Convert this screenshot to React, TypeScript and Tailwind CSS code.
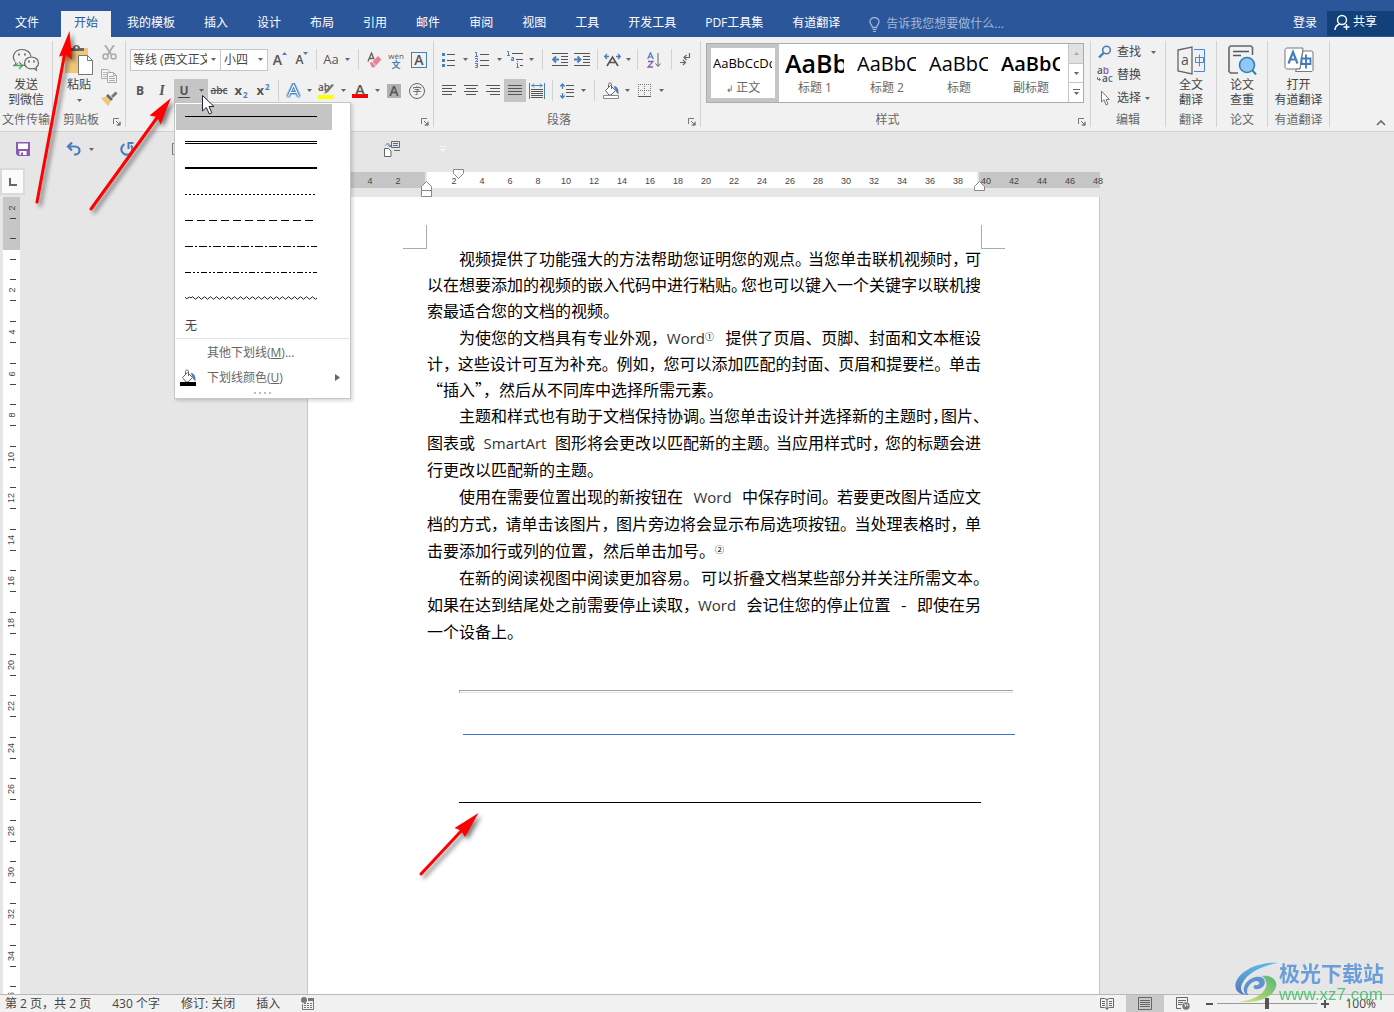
import { Fragment, ReactNode, useState } from "react";
import clsx from "clsx";

const TABS = [
  "文件",
  "开始",
  "我的模板",
  "插入",
  "设计",
  "布局",
  "引用",
  "邮件",
  "审阅",
  "视图",
  "工具",
  "开发工具",
  "PDF工具集",
  "有道翻译",
];

const STYLES = [
  { name: "正文", sample: "AaBbCcDd", font: "text-[13px]" },
  { name: "标题 1", sample: "AaBb", font: "text-[25px] font-semibold" },
  { name: "标题 2", sample: "AaBbC", font: "text-[20px]" },
  { name: "标题", sample: "AaBbC", font: "text-[20px]" },
  { name: "副标题", sample: "AaBbC", font: "text-[20px] font-semibold" },
];

type DocLine = { text: string; indent?: boolean; last?: boolean };

const PARAGRAPHS: { className: string; line: string; lines: DocLine[] }[] = [
  {
    className: "leading-[26px] mb-px",
    line: "h-[26px]",
    lines: [
      { text: "视频提供了功能强大的方法帮助您证明您的观点。当您单击联机视频时，可", indent: true },
      { text: "以在想要添加的视频的嵌入代码中进行粘贴。您也可以键入一个关键字以联机搜" },
      { text: "索最适合您的文档的视频。", last: true },
    ],
  },
  {
    className: "leading-[26px]",
    line: "h-[26px]",
    lines: [
      { text: "为使您的文档具有专业外观，Word① 提供了页眉、页脚、封面和文本框设", indent: true },
      { text: "计，这些设计可互为补充。例如，您可以添加匹配的封面、页眉和提要栏。单击" },
      { text: "“插入”，然后从不同库中选择所需元素。", last: true },
    ],
  },
  {
    className: "leading-[27px]",
    line: "h-[27px]",
    lines: [
      { text: "主题和样式也有助于文档保持协调。当您单击设计并选择新的主题时，图片、", indent: true },
      { text: "图表或 SmartArt 图形将会更改以匹配新的主题。当应用样式时，您的标题会进" },
      { text: "行更改以匹配新的主题。", last: true },
    ],
  },
  {
    className: "leading-[27px]",
    line: "h-[27px]",
    lines: [
      { text: "使用在需要位置出现的新按钮在 Word 中保存时间。若要更改图片适应文", indent: true },
      { text: "档的方式，请单击该图片，图片旁边将会显示布局选项按钮。当处理表格时，单" },
      { text: "击要添加行或列的位置，然后单击加号。②", last: true },
    ],
  },
  {
    className: "leading-[27px]",
    line: "h-[27px]",
    lines: [
      { text: "在新的阅读视图中阅读更加容易。可以折叠文档某些部分并关注所需文本。", indent: true },
      { text: "如果在达到结尾处之前需要停止读取，Word 会记住您的停止位置 - 即使在另" },
      { text: "一个设备上。", last: true },
    ],
  },
];

const H_RULER = [8, 6, 4, 2, 0, ...Array.from({ length: 24 }, (_, i) => (i + 1) * 2)];
const V_RULER = Array.from({ length: 19 }, (_, i) => i * 2);

const UNDERLINES = ["单线", "双线", "粗线", "点线", "虚线", "点划线", "双点划线", "波浪线"];

/* ---------- small pieces ---------- */

function Svg({
  w,
  h,
  children,
  className,
}: {
  w: number;
  h: number;
  children: ReactNode;
  className?: string;
}) {
  return (
    <svg width={w} height={h} viewBox={`0 0 ${w} ${h}`} fill="none" className={clsx("shrink-0", className)} aria-hidden="true">
      {children}
    </svg>
  );
}

function Caret() {
  return (
    <Svg w={5} h={3}>
      <path d="M0 0h5L2.500 3z" fill="#666" />
    </Svg>
  );
}

function Tool({ label, w, active, children }: { label: string; w: string; active?: boolean; children: ReactNode }) {
  return (
    <button
      type="button"
      aria-label={label}
      className={clsx("flex h-[23px] shrink-0 items-center justify-center text-[#555]", w, active && "bg-[#c5c5c5]")}
    >
      {children}
    </button>
  );
}

function Drop({ label, active, w = "w-[10px]" }: { label: string; active?: boolean; w?: string }) {
  return (
    <Tool label={label} w={w} active={active}>
      <Caret />
    </Tool>
  );
}

function Sep({ w = "w-2" }: { w?: string }) {
  return (
    <span className={clsx("flex h-[21px] shrink-0 justify-center", w)}>
      <span className="w-px bg-[#d2d2d2]" />
    </span>
  );
}

function Group({ label, w, launcher, children }: { label: string; w: string; launcher?: boolean; children: ReactNode }) {
  return (
    <section aria-label={label} className={clsx("flex shrink-0 flex-col border-r border-[#d2d2d2]", w)}>
      <div className="flex-1">{children}</div>
      <div className="flex h-[14px] items-center">
        <span className="flex-1 text-center leading-4 whitespace-nowrap text-[#666]">{label}</span>
        {launcher && (
          <button type="button" aria-label={`${label}设置`} className="mt-1 mr-1 ml-1">
            <Svg w={8} h={8}>
              <path d="M.5 6V.5H6M3 3l3 3M7 3.500V7H3.500" stroke="#777" />
              <path d="M7.500 4v3.500H4z" fill="#777" />
            </Svg>
          </button>
        )}
      </div>
    </section>
  );
}

function BigButton({ icon, lines }: { icon: ReactNode; lines: string[] }) {
  return (
    <button type="button" className="flex w-full flex-col items-center pt-1 leading-[15px] text-[#444]">
      <span className="mb-[2px] flex h-[30px] items-center">{icon}</span>
      {lines.map((l) => (
        <span key={l} className="whitespace-nowrap">
          {l}
        </span>
      ))}
    </button>
  );
}

/* horizontal strokes for list and alignment icons: [y, x1, x2] */
function Strokes({ rows, color = "#555" }: { rows: number[][]; color?: string }) {
  return <path d={rows.map(([y, a, b]) => `M${a} ${y + 0.5}H${b}`).join("")} stroke={color} />;
}

function BucketIcon({ bar }: { bar: "outline" | "black" }) {
  return (
    <Svg w={16} h={17}>
      <path d="M2.500 8.500l5-5 5 5-4.500 4.500H6z" fill="#fff" stroke="#666" />
      <path d="M5.500 6V2.500C5.500.5 8.500.5 8.500 2.500V7" stroke="#666" />
      <path d="M10.500 4c3.500 0 5.500 3 5 8-1.500-.5-2.500-2-3-4z" fill="#4a7ebb" />
      {bar === "black" ? <path d="M0 13h16v4H0z" fill="#000" /> : <path d="M.5 13.500h15v3H.5z" fill="#fff" stroke="#888" />}
    </Svg>
  );
}

/* ---------- header ---------- */

function TitleBar() {
  return (
    <header className="flex h-[37px] shrink-0 items-end bg-[#2b579a] text-white">
      <nav className="flex gap-[3px] pl-[2px]">
        {TABS.map((t, i) => (
          <button
            key={t}
            type="button"
            className={clsx(
              "h-[26px] px-[13px] pb-[3px] whitespace-nowrap",
              i === 0 && "mr-[6px]",
              t === "开始" && "bg-[#f1f1f1] text-[#2b579a]"
            )}
          >
            {t}
          </button>
        ))}
      </nav>
      <label className="ml-4 flex h-[26px] items-center">
        <Svg w={11} h={15}>
          <path d="M3.500 10.500C3.500 8.500 1 7.500 1 4.800a4.500 4.300 0 0 1 9 0c0 2.700-2.500 3.700-2.500 5.700z" stroke="#a3b7d8" strokeWidth="1.300" />
          <path d="M3.500 12.500h4M4 14.500h3" stroke="#a3b7d8" />
        </Svg>
        <input
          aria-label="告诉我您想要做什么"
          placeholder="告诉我您想要做什么..."
          className="ml-[6px] w-[140px] bg-transparent outline-none placeholder:text-[#a3b7d8]"
        />
      </label>
      <div className="ml-auto flex">
        <button type="button" className="h-[26px] px-[10px] pb-[3px]">
          登录
        </button>
        <button type="button" className="mb-px flex h-[25px] items-center gap-[3px] bg-[#124078] pr-[17px] pb-[3px] pl-[7px]">
          <Svg w={16} h={17}>
            <circle cx="8" cy="6" r="4.500" stroke="#fff" strokeWidth="1.400" />
            <path d="M1 16c0-3.500 2-5 4.500-6M12.500 10v6M9.500 13h6" stroke="#fff" strokeWidth="1.400" />
          </Svg>
          共享
        </button>
      </div>
    </header>
  );
}

/* ---------- underline menu ---------- */

function UnderlineSample({ kind }: { kind: number }) {
  const dash = ["", "", "", "2 2", "8 4", "8 2 2 2", "6 2 2 2 2 2"][kind];
  const wave = "M0 2q1.500 3 3 1t3 0" + Array.from({ length: 21 }, () => "q1.500-2.500 3 0t3 0").join("");
  return (
    <Svg w={132} h={8}>
      {kind === 1 && <path d="M0 2.500h132M0 4.500h132" stroke="#000" />}
      {kind === 2 && <path d="M0 3h132" stroke="#000" strokeWidth="2" />}
      {kind === 7 && <path d={wave} stroke="#222" />}
      {kind !== 1 && kind !== 2 && kind !== 7 && <path d="M0 3.500h132" stroke="#000" strokeDasharray={dash} />}
    </Svg>
  );
}

function UnderlineMenu() {
  return (
    <div className="absolute top-[23px] left-0 z-20 w-[177px] border border-[#c6c6c6] bg-white p-px text-left shadow-[2px_2px_3px_rgba(0,0,0,0.15)]">
      {UNDERLINES.map((u, i) => (
        <button
          key={u}
          type="button"
          aria-label={u}
          className={clsx("flex h-[26px] w-[156px] items-center pl-[9px]", i === 0 && "bg-[#c5c5c5]")}
        >
          <UnderlineSample kind={i} />
        </button>
      ))}
      <button type="button" className="block h-[26px] w-full pt-[2px] pl-[9px] text-left text-[#444]">
        无
      </button>
      <div className="border-t border-[#e1e1e1]" />
      <button type="button" className="block h-[26px] w-full pt-[2px] pl-[31px] text-left text-[#666]">
        其他下划线(<u>M</u>)...
      </button>
      <button type="button" className="flex h-[25px] w-full items-center pr-[9px] pl-1 text-[#666]">
        <BucketIcon bar="black" />
        <span className="ml-[11px]">
          下划线颜色(<u>U</u>)
        </span>
        <Svg w={5} h={7} className="ml-auto">
          <path d="M0 0l5 3.500L0 7z" fill="#666" />
        </Svg>
      </button>
      <div className="flex h-[7px] justify-center gap-[3px] pt-[2px]">
        {[0, 1, 2, 3].map((n) => (
          <span key={n} className="size-[2px] bg-[#b8bcc8]" />
        ))}
      </div>
    </div>
  );
}

/* ---------- ribbon ---------- */

function ClipboardGroup() {
  return (
    <Group label="剪贴板" w="w-[73px]" launcher>
      <div className="flex pl-[9px]">
        <button type="button" className="flex w-[34px] flex-col items-center pt-1 leading-[15px] text-[#444]">
          <Svg w={30} h={30} className="mb-[2px]">
            <path d="M1 3h23v25H1z" fill="#efc67b" />
            <path d="M5 6V3h4c0-4 7-4 7 0h4v3z" fill="#666" />
            <circle cx="12.500" cy="2.500" r="1.200" fill="#f1f1f1" />
            <path d="M14.500 10.500h9l5 5v14h-14z" fill="#fff" stroke="#777" />
            <path d="M23.500 10.500v5h5" stroke="#777" />
          </Svg>
          粘贴
          <span className="flex h-4 items-center">
            <Caret />
          </span>
        </button>
        <div className="flex flex-col items-center">
          <Tool label="剪切" w="w-[26px]">
            <Svg w={15} h={15}>
              <path d="M3 0l6.500 10M12 0L5.500 10" stroke="#aaa" strokeWidth="1.800" />
              <circle cx="3.500" cy="11.500" r="2.500" stroke="#aaa" strokeWidth="1.500" />
              <circle cx="11.500" cy="11.500" r="2.500" stroke="#aaa" strokeWidth="1.500" />
            </Svg>
          </Tool>
          <Tool label="复制" w="w-[26px]">
            <Svg w={16} h={14}>
              <path d="M.5.5h6l2 2v7h-8z" fill="#f6f6f6" stroke="#aaa" />
              <path d="M2 3.500h4M2 5.500h4M2 7.500h4" stroke="#bbb" />
              <path d="M6.500 3.500h6l3 3v7h-9z" fill="#f6f6f6" stroke="#aaa" />
              <path d="M8 7.500h5M8 9.500h6M8 11.500h6M12.500 3.500v3h3" stroke="#aaa" />
            </Svg>
          </Tool>
          <Tool label="格式刷" w="w-[26px]">
            <Svg w={17} h={15}>
              <path d="M0 7l5-1.500 5 5L7 15z" fill="#efc67b" />
              <path d="M5 5l2-2 5 5-2 2z" fill="#666" />
              <path d="M10 5l4.500-4.500 2 2L12 7z" fill="#777" />
            </Svg>
          </Tool>
        </div>
      </div>
    </Group>
  );
}

function FontGroup() {
  const selectClass = "h-[22px] w-full appearance-none border border-[#c6c6c6] bg-white text-[#444] outline-none";
  return (
    <Group label="字体" w="w-[308px]" launcher>
      <div className="flex flex-col gap-2 pt-[7px] pl-1">
        <div className="flex items-center">
          <span className="relative w-[91px]">
            <select aria-label="字体" className={clsx(selectClass, "pr-[13px] pl-[2px]")}>
              <option>等线 (西文正文)</option>
            </select>
            <span className="pointer-events-none absolute top-[9px] right-[5px]">
              <Caret />
            </span>
          </span>
          <span className="relative w-[47px]">
            <select aria-label="字号" className={clsx(selectClass, "border-l-0 pl-[3px]")}>
              <option>小四</option>
            </select>
            <span className="pointer-events-none absolute top-[9px] right-[5px]">
              <Caret />
            </span>
          </span>
          <Tool label="增大字号" w="w-6">
            <span className="text-[14px] font-semibold">A</span>
            <Svg w={5} h={3} className="mb-3">
              <path d="M0 3h5L2.500 0z" fill="#4a7ebb" />
            </Svg>
          </Tool>
          <Tool label="减小字号" w="w-5">
            <span className="text-[12px] font-semibold">A</span>
            <Svg w={5} h={3} className="mb-3">
              <path d="M0 0h5L2.500 3z" fill="#4a7ebb" />
            </Svg>
          </Tool>
          <Sep />
          <Tool label="更改大小写" w="w-[22px]">
            <span className="text-[13px]">Aa</span>
          </Tool>
          <Drop label="大小写选项" />
          <Sep w="w-3" />
          <Tool label="清除格式" w="w-5">
            <Svg w={15} h={16}>
              <path d="M1 9.500L4.500 1 7 7M2.500 6.500h4" stroke="#666" strokeWidth="1.400" />
              <path d="M5.500 9.500l5.500-5.500 3.500 3.500-5.500 6z" fill="#e8829a" />
              <path d="M2.500 10.500l2.500-.5 3.500 4-1.500 1.500H5z" fill="#e8829a" />
            </Svg>
          </Tool>
          <Tool label="拼音指南" w="w-6">
            <span className="flex flex-col items-center leading-[9px]">
              <span className="text-[8px]">wén</span>
              <span className="text-[9px] font-bold text-[#4a7ebb]">文</span>
            </span>
          </Tool>
          <Tool label="字符边框" w="w-[22px]">
            <span className="flex size-4 items-center justify-center border border-[#4a7ebb] text-[14px] font-semibold">A</span>
          </Tool>
        </div>
        <div className="flex items-center">
          <Tool label="加粗" w="w-5">
            <span className="text-[12px] font-bold">B</span>
          </Tool>
          <Tool label="倾斜" w="w-6">
            <span className="font-['Liberation_Serif',serif] text-[14px] font-bold italic">I</span>
          </Tool>
          <span className="relative flex">
            <Tool label="下划线" w="w-5" active>
              <span className="border-b border-[#444] px-px text-[12px] leading-[13px] font-bold">U</span>
            </Tool>
            <Drop label="下划线选项" w="w-[14px]" active />
            <UnderlineMenu />
          </span>
          <Tool label="删除线" w="w-[22px]">
            <s className="text-[10px] font-semibold">abc</s>
          </Tool>
          <Tool label="下标" w="w-[22px]">
            <span className="text-[13px] font-bold">x</span>
            <span className="mt-2 ml-px text-[8px] font-bold text-[#4a7ebb]">2</span>
          </Tool>
          <Tool label="上标" w="w-[22px]">
            <span className="text-[13px] font-bold">x</span>
            <span className="mb-2 ml-px text-[8px] font-bold text-[#4a7ebb]">2</span>
          </Tool>
          <Sep />
          <Tool label="文本效果" w="w-[22px]">
            <Svg w={15} h={15}>
              <path d="M2.500 12.500L7.500 2l5 10.500M4.500 9.500h6" stroke="#a9c6e8" strokeWidth="5" strokeLinejoin="round" strokeLinecap="round" />
              <path d="M2.500 13L7.500 1.500 12.500 13M4.500 9.500h6" stroke="#4a7ebb" strokeWidth="3" strokeLinejoin="round" />
              <path d="M2.500 13L7.500 2l5 11M4.500 9.500h6" stroke="#f4f8fc" strokeWidth="1.200" />
            </Svg>
          </Tool>
          <Drop label="文本效果选项" />
          <Tool label="突出显示" w="w-6">
            <Svg w={17} h={17}>
              <text x="0" y="9" fontSize="10" fontWeight="600" fill="#555" fontFamily="Open Sans">
                ab
              </text>
              <path d="M6 12l2-4 6-6 2 1-6 7z" fill="#777" />
              <path d="M0 13h16v4H0z" fill="#ff0" />
            </Svg>
          </Tool>
          <Drop label="突出显示颜色" />
          <Tool label="字体颜色" w="w-6">
            <span className="flex h-[15px] w-4 items-center justify-center border-b-4 border-[#f00] text-[15px] leading-[10px] font-semibold">A</span>
          </Tool>
          <Drop label="字体颜色选项" />
          <Tool label="字符底纹" w="w-6">
            <span className="flex size-[14px] items-center justify-center bg-[#b1b1b1] text-[14px] font-semibold">A</span>
          </Tool>
          <Tool label="带圈字符" w="w-[22px]">
            <span className="flex size-4 items-center justify-center rounded-full border border-[#666] text-[9px]">字</span>
          </Tool>
        </div>
      </div>
    </Group>
  );
}

function ParagraphGroup() {
  return (
    <Group label="段落" w="w-[267px]" launcher>
      <div className="flex flex-col gap-2 pt-[7px] pl-1">
        <div className="flex items-center">
          <Tool label="项目符号" w="w-[22px]">
            <Svg w={14} h={16}>
              <path d="M0 1h3v3H0zM0 7h3v3H0zM0 12h3v3H0z" fill="#4a7ebb" />
              <Strokes rows={[[2, 5, 13], [8, 5, 13], [13, 5, 13]]} />
            </Svg>
          </Tool>
          <Drop label="项目符号选项" />
          <Tool label="编号" w="w-6">
            <Svg w={15} h={16}>
              <path d="M0 .5h1.500v4M0 4.500h3M0 6.500h2.500v1.500L.5 9.500H3M0 11.500h2.500v4H0M.5 13.500h2" stroke="#4a7ebb" />
              <Strokes rows={[[2, 5, 14], [8, 5, 14], [13, 5, 14]]} />
            </Svg>
          </Tool>
          <Drop label="编号选项" />
          <Tool label="多级列表" w="w-[22px]">
            <Svg w={17} h={17}>
              <path d="M0 .5h1.500v4M0 4.500h3M4.500 6.500h2v3h-2v-1.500h2M10.500 10v1M9.500 12.500h1V16M9.500 16.500h2.500" stroke="#4a7ebb" />
              <Strokes rows={[[2, 5, 16], [8, 9, 16], [14, 13, 16]]} />
            </Svg>
          </Tool>
          <Drop label="多级列表选项" />
          <Sep w="w-[13px]" />
          <Tool label="减少缩进量" w="w-[22px]">
            <Svg w={16} h={14}>
              <Strokes rows={[[0, 0, 16], [3, 9, 16], [6, 9, 16], [9, 9, 16], [12, 0, 16]]} />
              <path d="M1 6.500h6M4 3.500l-3 3 3 3" stroke="#4a7ebb" strokeWidth="1.800" />
            </Svg>
          </Tool>
          <Tool label="增加缩进量" w="w-[22px]">
            <Svg w={16} h={14}>
              <Strokes rows={[[0, 0, 16], [3, 9, 16], [6, 9, 16], [9, 9, 16], [12, 0, 16]]} />
              <path d="M0 6.500h6M3.500 3.500l3 3-3 3" stroke="#4a7ebb" strokeWidth="1.800" />
            </Svg>
          </Tool>
          <Sep />
          <Tool label="中文版式" w="w-[22px]">
            <Svg w={17} h={14}>
              <path d="M3 13l5.500-9L14 13M5.500 9.500h6" stroke="#555" strokeWidth="1.600" />
              <path d="M1 3.500h4M3 1L.7 3.500 3 6M12 3.500h4M14 1l2.300 2.500L14 6" stroke="#4a7ebb" strokeWidth="1.300" />
            </Svg>
          </Tool>
          <Drop label="中文版式选项" />
          <Sep />
          <Tool label="排序" w="w-[26px]">
            <Svg w={14} h={16}>
              <path d="M.7 7L3.500.7 6.300 7M1.500 5h4" stroke="#4a7ebb" strokeWidth="1.200" />
              <path d="M1 9.500h5l-5 5.500h5" stroke="#8e5bb0" strokeWidth="1.300" />
              <path d="M11 1v13M8.500 11.500L11 14.500l2.500-3" stroke="#666" />
            </Svg>
          </Tool>
          <Sep />
          <Tool label="显示编辑标记" w="w-5">
            <Svg w={11} h={13}>
              <path d="M9.500 0v4.500H4.500M6.500 2l-2.500 2.500 2.500 2.500M0 9.500h5M3 7l2.500 2.500L3 12" stroke="#666" strokeWidth="1.200" />
            </Svg>
          </Tool>
        </div>
        <div className="flex items-center">
          <Tool label="左对齐" w="w-[22px]">
            <Svg w={14} h={12}>
              <Strokes rows={[[0, 0, 14], [3, 0, 10], [6, 0, 14], [9, 0, 10]]} />
            </Svg>
          </Tool>
          <Tool label="居中" w="w-[22px]">
            <Svg w={14} h={12}>
              <Strokes rows={[[0, 0, 14], [3, 2, 12], [6, 0, 14], [9, 2, 12]]} />
            </Svg>
          </Tool>
          <Tool label="右对齐" w="w-[22px]">
            <Svg w={14} h={12}>
              <Strokes rows={[[0, 0, 14], [3, 4, 14], [6, 0, 14], [9, 4, 14]]} />
            </Svg>
          </Tool>
          <Tool label="两端对齐" w="w-[22px]" active>
            <Svg w={14} h={12}>
              <Strokes rows={[[0, 0, 14], [3, 0, 14], [6, 0, 14], [9, 0, 14]]} />
            </Svg>
          </Tool>
          <Tool label="分散对齐" w="w-[22px]">
            <Svg w={16} h={16}>
              <path d="M.5 0v16M15.500 0v16" stroke="#4a7ebb" />
              <path d="M2.500 2.500h11M5 .5l-2 2 2 2M11 .5l2 2-2 2" stroke="#4a7ebb" />
              <Strokes rows={[[6, 2, 14], [8, 2, 14], [10, 2, 14], [12, 2, 14], [14, 2, 14]]} />
            </Svg>
          </Tool>
          <Sep />
          <Tool label="行距" w="w-[22px]">
            <Svg w={15} h={16}>
              <path d="M2.500 1v5M2.500 10v5M.3 3.500L2.500 1l2.200 2.500M.3 12.500L2.500 15l2.200-2.500" stroke="#4a7ebb" strokeWidth="1.300" />
              <Strokes rows={[[2, 6, 14], [6, 6, 14], [9, 6, 14], [13, 6, 14]]} />
            </Svg>
          </Tool>
          <Drop label="行距选项" />
          <Sep w="w-3" />
          <Tool label="底纹" w="w-[22px]">
            <BucketIcon bar="outline" />
          </Tool>
          <Drop label="底纹选项" />
          <Tool label="边框" w="w-6">
            <Svg w={13} h={13}>
              <path d="M.5 0v12M12.500 0v12M6.500 0v12M0 .5h13M0 6.500h13" stroke="#777" strokeDasharray="1 1" />
              <path d="M0 12.500h13" stroke="#555" />
            </Svg>
          </Tool>
          <Drop label="边框选项" />
        </div>
      </div>
    </Group>
  );
}

function StylesGroup() {
  return (
    <Group label="样式" w="w-[390px]" launcher>
      <div className="px-[5px] pt-[2px]">
        <div className="flex h-[60px] w-[378px] border border-[#ababab] bg-white">
          {STYLES.map((s, i) => (
            <button
              key={s.name}
              type="button"
              className={clsx("flex w-[72px] flex-col border-4 text-[#666]", i === 0 ? "border-[#c5c5c5]" : "border-transparent")}
            >
              <span className={clsx("flex h-8 w-full items-center overflow-hidden pl-[2px] text-black", s.font)}>
                <span className="w-[59px] overflow-hidden text-left whitespace-nowrap">{s.sample}</span>
              </span>
              <span className="w-full text-center leading-4">
                {i === 0 && <span className="text-[9px]">↲ </span>}
                {s.name}
              </span>
            </button>
          ))}
          <div className="ml-auto flex w-[15px] flex-col border-l border-[#c6c6c6]">
            <button type="button" aria-label="上一行" className="flex flex-1 items-center justify-center bg-[#e1e1e1]">
              <Svg w={5} h={3}>
                <path d="M0 3h5L2.500 0z" fill="#aaa" />
              </Svg>
            </button>
            <button type="button" aria-label="下一行" className="flex flex-1 items-center justify-center border-y border-[#c6c6c6]">
              <Caret />
            </button>
            <button type="button" aria-label="其他样式" className="flex flex-1 items-center justify-center">
              <Svg w={7} h={7}>
                <path d="M0 .5h7" stroke="#666" />
                <path d="M1 3h5L3.500 6z" fill="#666" />
              </Svg>
            </button>
          </div>
        </div>
      </div>
    </Group>
  );
}

function EditGroup() {
  const row = "flex h-[23px] items-center pb-px text-[#444]";
  return (
    <Group label="编辑" w="w-[75px]">
      <div className="flex flex-col pl-[6px]">
        <button type="button" className={row}>
          <Svg w={16} h={14} className="mr-1">
            <circle cx="9.500" cy="5" r="3.800" stroke="#4a7ebb" strokeWidth="1.600" />
            <path d="M6.500 8L2 12.500" stroke="#4a7ebb" strokeWidth="2.400" />
          </Svg>
          <span className="mr-[10px]">查找</span>
          <Caret />
        </button>
        <button type="button" className={row}>
          <Svg w={16} h={16} className="mr-1">
            <text x="0" y="7" fontSize="10" fontWeight="600" fill="#555" fontFamily="Open Sans">
              a<tspan fill="#8e5bb0">b</tspan>
            </text>
            <text x="5" y="15" fontSize="10" fontWeight="600" fill="#555" fontFamily="Open Sans">
              a<tspan fill="#4a7ebb">c</tspan>
            </text>
            <path d="M.5 10v2.500H3M2 11l1.500 1.500L2 14" stroke="#4a7ebb" />
          </Svg>
          替换
        </button>
        <button type="button" className={row}>
          <Svg w={16} h={16} className="mr-1">
            <path d="M4.500 1v11l2.500-2.300L9 15l2-1-2-4.500h3.300z" fill="#fff" stroke="#777" />
          </Svg>
          <span className="mr-1">选择</span>
          <Caret />
        </button>
      </div>
    </Group>
  );
}

function Ribbon() {
  return (
    <div className="flex h-[95px] shrink-0 border-b border-[#d2d2d2] bg-[#f1f1f1] pt-1 pb-1">
      <Group label="文件传输" w="w-[53px]">
        <BigButton
          lines={["发送", "到微信"]}
          icon={
            <Svg w={28} h={24}>
              <path d="M3 13.500C-1 8 3 1.500 10 1.500c5 0 8.500 3 9 7M9 17c1 .3 2.500.5 4 .3" stroke="#666" strokeWidth="1.200" />
              <path d="M4 14l-1 3 3-1.500" stroke="#666" />
              <path d="M19.500 9c4 0 7 2.500 7 6 0 2-1 3.500-2.500 4.500l.5 2.500-2.500-1.500c-6 1.500-9.500-2-9.500-5.500s3-6 7-6z" stroke="#666" strokeWidth="1.200" />
              <path d="M7 5.500v2M13 5.500v2M17 12.500v2M22 12.500v2" stroke="#555" strokeWidth="1.500" />
              <path d="M1 17.500h9M7 14l3.500 3.500L7 21" stroke="#4aa564" strokeWidth="1.400" />
            </Svg>
          }
        />
      </Group>
      <ClipboardGroup />
      <FontGroup />
      <ParagraphGroup />
      <StylesGroup />
      <EditGroup />
      <Group label="翻译" w="w-[51px]">
        <BigButton
          lines={["全文", "翻译"]}
          icon={
            <Svg w={29} h={29}>
              <path d="M1 4l14-3v27L1 25z" stroke="#666" strokeWidth="1.300" />
              <path d="M17 3.500h10.500v22H17" stroke="#4a86d8" />
              <path d="M18.500 11.500h8v5h-8zM22.500 8.500v12" stroke="#4a86d8" />
              <text x="4" y="19" fontSize="14" fill="#555" fontFamily="Open Sans">
                a
              </text>
            </Svg>
          }
        />
      </Group>
      <Group label="论文" w="w-[51px]">
        <BigButton
          lines={["论文", "查重"]}
          icon={
            <Svg w={29} h={30}>
              <path d="M10 28H2.500l-1.500-1.500v-24L2.500 1H23l1.500 1.500V10" stroke="#666" strokeWidth="1.600" />
              <path d="M5 6.500h16M5 10.500h8" stroke="#555" strokeWidth="1.600" />
              <circle cx="19" cy="20" r="7.500" fill="#90c8f8" stroke="#2f80b8" strokeWidth="1.600" />
              <path d="M24.500 25.500l3.500 4" stroke="#2f80b8" strokeWidth="2" />
            </Svg>
          }
        />
      </Group>
      <Group label="有道翻译" w="w-[62px]">
        <BigButton
          lines={["打开", "有道翻译"]}
          icon={
            <Svg w={30} h={26}>
              <path d="M1 2.500L2.500 1H19l-3 21H2.500L1 20.500z" fill="#fff" stroke="#777" />
              <path d="M19 4h9l1 1v18.500l-1 1H11.500l1-2.500H16z" fill="#fff" stroke="#777" />
              <path d="M4.500 16.500L9 5l4.500 11.500M6 12.500h6" stroke="#4a7ebb" strokeWidth="2.200" />
              <path d="M17.500 11.500h9v5.500h-9zM22 7.500v14" stroke="#3a78c0" strokeWidth="1.800" />
            </Svg>
          }
        />
      </Group>
      <button type="button" aria-label="折叠功能区" className="mt-auto mr-2 mb-px ml-auto">
        <Svg w={10} h={6}>
          <path d="M1 5l4-4 4 4" stroke="#666" strokeWidth="1.600" />
        </Svg>
      </button>
    </div>
  );
}

function QuickAccess() {
  return (
    <div className="flex h-[34px] shrink-0 items-center pl-4">
      <button type="button" aria-label="保存">
        <Svg w={14} h={14}>
          <path d="M0 0h14v14H2l-2-2z" fill="#8a5bb0" />
          <path d="M2 1.500h10V7H2zM3.500 9h7v4h-7z" fill="#fff" />
          <path d="M5 10.500h2V13H5z" fill="#8a5bb0" />
        </Svg>
      </button>
      <button type="button" aria-label="撤消" className="ml-9">
        <Svg w={15} h={14}>
          <path d="M2 4.500h7c6 0 6 8 0 8H8M6 .5L2 4.500l4 4" stroke="#4a7ebb" strokeWidth="2.200" />
        </Svg>
      </button>
      <button type="button" aria-label="撤消历史" className="ml-2 flex h-4 items-center">
        <Caret />
      </button>
      <button type="button" aria-label="恢复" className="ml-[26px]">
        <Svg w={14} h={14}>
          <path d="M4.500 2.200A5.500 5.500 0 1 0 11 3.500" stroke="#4a7ebb" strokeWidth="2.200" />
          <path d="M7.500 0h6v2h-4v5h-2z" fill="#4a7ebb" />
        </Svg>
      </button>
      <button type="button" aria-label="新建" className="ml-[38px]">
        <Svg w={10} h={12}>
          <path d="M.5.500h9v11h-9z" stroke="#777" />
        </Svg>
      </button>
      <button type="button" aria-label="转换" className="ml-[202px]">
        <Svg w={17} h={16}>
          <path d="M7.500.5h8v6h-8zM9 2.500h5M9 4.500h5M10 9.500h6" stroke="#666" />
          <path d="M.5 7.500h4l2.500 2.500v5.500H.5z" fill="#fff" stroke="#666" />
          <path d="M1.500 4.500c1-2.500 4-2.500 4.500 1M4 3.500l2 2.500 1.500-2.500" stroke="#4a7ebb" />
        </Svg>
      </button>
      <button type="button" aria-label="自定义快速访问工具栏" className="ml-[39px]">
        <Svg w={6} h={6}>
          <path d="M0 .5h6" stroke="#f6f6f6" />
          <path d="M0 3h6L3 6z" fill="#f6f6f6" />
        </Svg>
      </button>
    </div>
  );
}

/* ---------- document ---------- */

function Latin({ text }: { text: string }) {
  const parts = text.split(/([A-Za-z]+|[①②])/);
  return (
    <>
      {parts.map((p, i) => {
        if (/^[A-Za-z]+$/.test(p)) {
          return (
            <span key={i} className="font-['Open_Sans',sans-serif] text-[15px] text-[#333]">
              {p}
            </span>
          );
        }
        if (/^[①②]$/.test(p)) {
          return (
            <sup key={i} className="text-[9px] leading-none">
              {p}
            </sup>
          );
        }
        return <Fragment key={i}>{p}</Fragment>;
      })}
    </>
  );
}

/* Full lines are set flush: punctuation is half width and the slack goes after it. */
function Line({ line, height }: { line: DocLine; height: string }) {
  if (line.last) {
    return (
      <span className={clsx("block", height)}>
        <Latin text={line.text} />
      </span>
    );
  }
  const runs = line.text.split(/(?<=[，。、 ])/);
  return (
    <span
      className={clsx(
        "flex items-baseline justify-between whitespace-pre [font-feature-settings:'halt']",
        height,
        line.indent && "pl-8"
      )}
    >
      {runs.map((r, i) => (
        <span key={i}>
          <Latin text={r} />
        </span>
      ))}
    </span>
  );
}

function Page() {
  return (
    <article className="flex-1 overflow-hidden border-x border-[#c6c6c6] bg-white pt-7">
      <div className="mr-[94px] ml-[95px] flex h-5 justify-between">
        <span className="h-6 w-6 border-r border-b border-[#aaa]" />
        <span className="h-6 w-6 border-b border-l border-[#aaa]" />
      </div>
      <div className="mr-[118px] ml-[119px] font-['Noto_Sans_CJK_SC',sans-serif] text-[16px] text-black">
        {PARAGRAPHS.map((p, i) => (
          <p key={i} className={p.className}>
            {p.lines.map((l) => (
              <Line key={l.text} line={l} height={p.line} />
            ))}
          </p>
        ))}
        <hr className="mt-[45px] -mr-8 ml-8 h-[3px] border border-t-[#a0a0a0] border-r-[#e3e3e3] border-b-[#e3e3e3] border-l-[#a0a0a0]" />
        <hr className="mt-[41px] -mr-[34px] ml-9 border-[#4472c4]" />
        <hr className="mt-[67px] ml-8 border-black" />
      </div>
    </article>
  );
}

function Workspace() {
  return (
    <main className="flex min-h-0 flex-1">
      <div className="flex w-[25px] shrink-0 flex-col">
        <button type="button" aria-label="制表符" className="mt-[2px] flex h-[27px] items-center justify-center border-2 border-[#dadada] bg-[#fbfbfb]">
          <Svg w={8} h={8}>
            <path d="M1 0v7h7" stroke="#666" strokeWidth="2" />
          </Svg>
        </button>
        <div className="mt-[2px] ml-[3px] min-h-0 w-[17px] flex-1 overflow-hidden bg-[linear-gradient(#c6c6c6_53px,#fff_53px)] pl-[2px] font-['Liberation_Sans',sans-serif] text-[9px] text-[#444]">
          <div className="flex h-[31px] flex-col items-center gap-1 pt-[5px]">
            <span className="flex h-3 -rotate-90 items-center">2</span>
            <span className="h-px w-[6px] shrink-0 bg-[#444]" />
          </div>
          <div className="grid h-[790px] auto-rows-fr">
            {V_RULER.map((n) => (
              <div key={n} className="flex flex-col items-center justify-center gap-1">
                <span className="h-px w-[6px] shrink-0 bg-[#444]" />
                <span className="flex h-3 -rotate-90 items-center">{n || ""}</span>
                <span className="h-px w-[6px] shrink-0 bg-[#444]" />
              </div>
            ))}
          </div>
        </div>
      </div>
      <div className="flex min-w-0 flex-1 justify-center pr-3">
        <div className="flex w-[793px] flex-col">
          <div className="relative mt-[6px] mb-[9px] h-4 bg-[linear-gradient(to_right,#c6c6c6_118px,#e6e6e6_118px,#e6e6e6_120px,#fff_120px,#fff_670px,#e6e6e6_670px,#e6e6e6_672px,#c6c6c6_672px)]">
            <div className="-ml-[7px] flex font-['Liberation_Sans',sans-serif] text-[9px] leading-[18px] text-[#444]">
              {H_RULER.map((n, i) => (
                <span key={i} className="w-7 shrink-0 text-center">
                  {n || ""}
                </span>
              ))}
            </div>
            <Svg w={11} h={10} className="absolute -top-[3px] left-[146px]">
              <path d="M.5.5h10v4l-5 5-5-5z" fill="#fff" stroke="#888" />
            </Svg>
            <Svg w={11} h={16} className="absolute top-[9px] left-[114px]">
              <path d="M.5 5.500l5-5 5 5v10H.5zM.5 9.500h10" fill="#fff" stroke="#888" />
            </Svg>
            <Svg w={11} h={10} className="absolute top-[9px] left-[667px]">
              <path d="M.5 5.500l5-5 5 5v4H.5z" fill="#fff" stroke="#888" />
            </Svg>
          </div>
          <Page />
        </div>
      </div>
    </main>
  );
}

/* ---------- status bar ---------- */

function StatusBar() {
  const [zoom, setZoom] = useState(50);
  return (
    <footer className="flex h-[18px] shrink-0 items-center border-t border-[#b8b8b8] bg-[#f1f1f1] text-[#444]">
      <div className="flex items-center gap-[21px] pl-[5px] whitespace-nowrap">
        <span>第 2 页，共 2 页</span>
        <span>430 个字</span>
        <span>修订: 关闭</span>
        <span>插入</span>
        <Svg w={13} h={13}>
          <circle cx="3" cy="3" r="3" fill="#777" />
          <path d="M7 1.500h5.500v11H1.500V7" stroke="#777" />
          <path d="M7 1h6v3H7z" fill="#777" />
          <path d="M3 6.500h9M3 8.500h9M3 10.500h9" stroke="#777" strokeDasharray="2 1" />
        </Svg>
      </div>
      <div className="ml-auto flex h-full items-center pr-[18px]">
        <button type="button" aria-label="阅读视图" className="mr-3">
          <Svg w={14} h={13}>
            <path d="M.5 1.500h4l2.500 1 2.500-1h4v9h-4l-2.500 1-2.500-1h-4zM7 2.500V13" stroke="#666" />
            <path d="M2 4.500h3M2 6.500h3M2 8.500h3M9 4.500h3M9 6.500h3M9 8.500h3" stroke="#666" />
          </Svg>
        </button>
        <button type="button" aria-label="页面视图" className="flex h-full w-[38px] items-center justify-center bg-[#c9c9c9]">
          <Svg w={14} h={13}>
            <path d="M.5.5h13v12H.5zM2 3.500h10M2 5.500h10M2 7.500h10M2 9.500h10" stroke="#666" />
          </Svg>
        </button>
        <button type="button" aria-label="Web 版式视图" className="ml-3">
          <Svg w={14} h={13}>
            <path d="M5 11.500H.5V.5h11V5M2 3.500h8M2 5.500h5M2 7.500h4" stroke="#666" />
            <circle cx="10" cy="9" r="3.700" fill="#777" />
            <path d="M8 7l2 1-1 2M11 7l1 2" stroke="#f1f1f1" />
          </Svg>
        </button>
        <button type="button" aria-label="缩小" className="ml-4 flex h-3 w-[7px] items-center">
          <span className="h-[2px] w-full bg-[#555]" />
        </button>
        <input
          type="range"
          aria-label="显示比例"
          value={zoom}
          onChange={(e) => setZoom(Number(e.target.value))}
          className="ml-1 h-3 w-[100px] appearance-none bg-[linear-gradient(#999,#999)] bg-size-[100%_1px] bg-center bg-no-repeat [&::-webkit-slider-thumb]:h-[11px] [&::-webkit-slider-thumb]:w-[4px] [&::-webkit-slider-thumb]:appearance-none [&::-webkit-slider-thumb]:bg-[#555]"
        />
        <button type="button" aria-label="放大" className="ml-1">
          <Svg w={8} h={8}>
            <path d="M0 4h8M4 0v8" stroke="#555" strokeWidth="2" />
          </Svg>
        </button>
        <span className="ml-4">{zoom * 2}%</span>
      </div>
    </footer>
  );
}

/* ---------- overlays ---------- */

function Arrows() {
  return (
    <svg width="500" height="890" viewBox="0 0 500 890" className="pointer-events-none absolute top-0 left-0 z-30 drop-shadow-[3px_3px_2px_rgba(0,0,0,0.5)]" aria-hidden="true">
      <path d="M37 202L65 52M91 209L159 115M421 874L463 829" stroke="#f00" strokeWidth="3" strokeLinecap="round" />
      <g fill="#f00">
        <path d="M69.500 31L72 59.500l-6-4.500-7 1.500z" />
        <path d="M171 98l-10.500 26.500-3-7.500-8-1.500z" />
        <path d="M478.500 813L465 837l-4-6.500-6.500-2.500z" />
      </g>
    </svg>
  );
}

function Pointer() {
  return (
    <Svg w={13} h={20} className="pointer-events-none absolute top-[95px] left-[202px] z-30">
      <path d="M.5.500v15.500l3.800-3.500 3 6.500 2.500-1.200-2.800-6.300h5z" fill="#fff" stroke="#223" />
    </Svg>
  );
}

function Watermark() {
  return (
    <div className="pointer-events-none absolute right-[10px] bottom-2 z-30 flex items-start opacity-85">
      <Svg w={44} h={42}>
        <defs>
          <linearGradient id="swirl" x1="0" y1="0" x2="0" y2="1">
            <stop offset="0" stopColor="#3fb4e8" />
            <stop offset="1" stopColor="#3c62b0" />
          </linearGradient>
          <linearGradient id="leaf" x1="1" y1="0" x2="0" y2="1">
            <stop offset="0" stopColor="#3aaf6a" />
            <stop offset="1" stopColor="#d8e05a" />
          </linearGradient>
        </defs>
        <path d="M43 1C25-1 3 9 .500 22c-1 7 4 10 10 11C6 30 5 27 7 22 12 11 26 4 43 1z" fill="url(#swirl)" />
        <path d="M11 33c-7-8 4-20 15-18 6 2 5 11-3 12-4 1-6-2-3-4 5 1 6-4 1-4-6 1-11 8-8 14z" fill="#4a86cc" />
        <path d="M27 14c8-1 16 3 14 11-3 9-14 16-37 15 14-2 24-7 27-15 1-4 0-8-4-11z" fill="url(#leaf)" />
      </Svg>
      <div className="flex h-[42px] flex-col">
        <span className="text-[21px] leading-[22px] font-bold text-[#5592d6]">极光下载站</span>
        <span className="font-['Liberation_Sans',sans-serif] text-[17px] leading-[22px] text-[#3fbf66]">www.xz7.com</span>
      </div>
    </div>
  );
}

export default function App() {
  return (
    <div className="relative flex h-screen min-h-[600px] flex-col overflow-hidden bg-[#e6e6e6] font-['Open_Sans','Noto_Sans_CJK_SC',sans-serif] text-[12px]">
      <TitleBar />
      <Ribbon />
      <QuickAccess />
      <Workspace />
      <StatusBar />
      <Arrows />
      <Pointer />
      <Watermark />
    </div>
  );
}
